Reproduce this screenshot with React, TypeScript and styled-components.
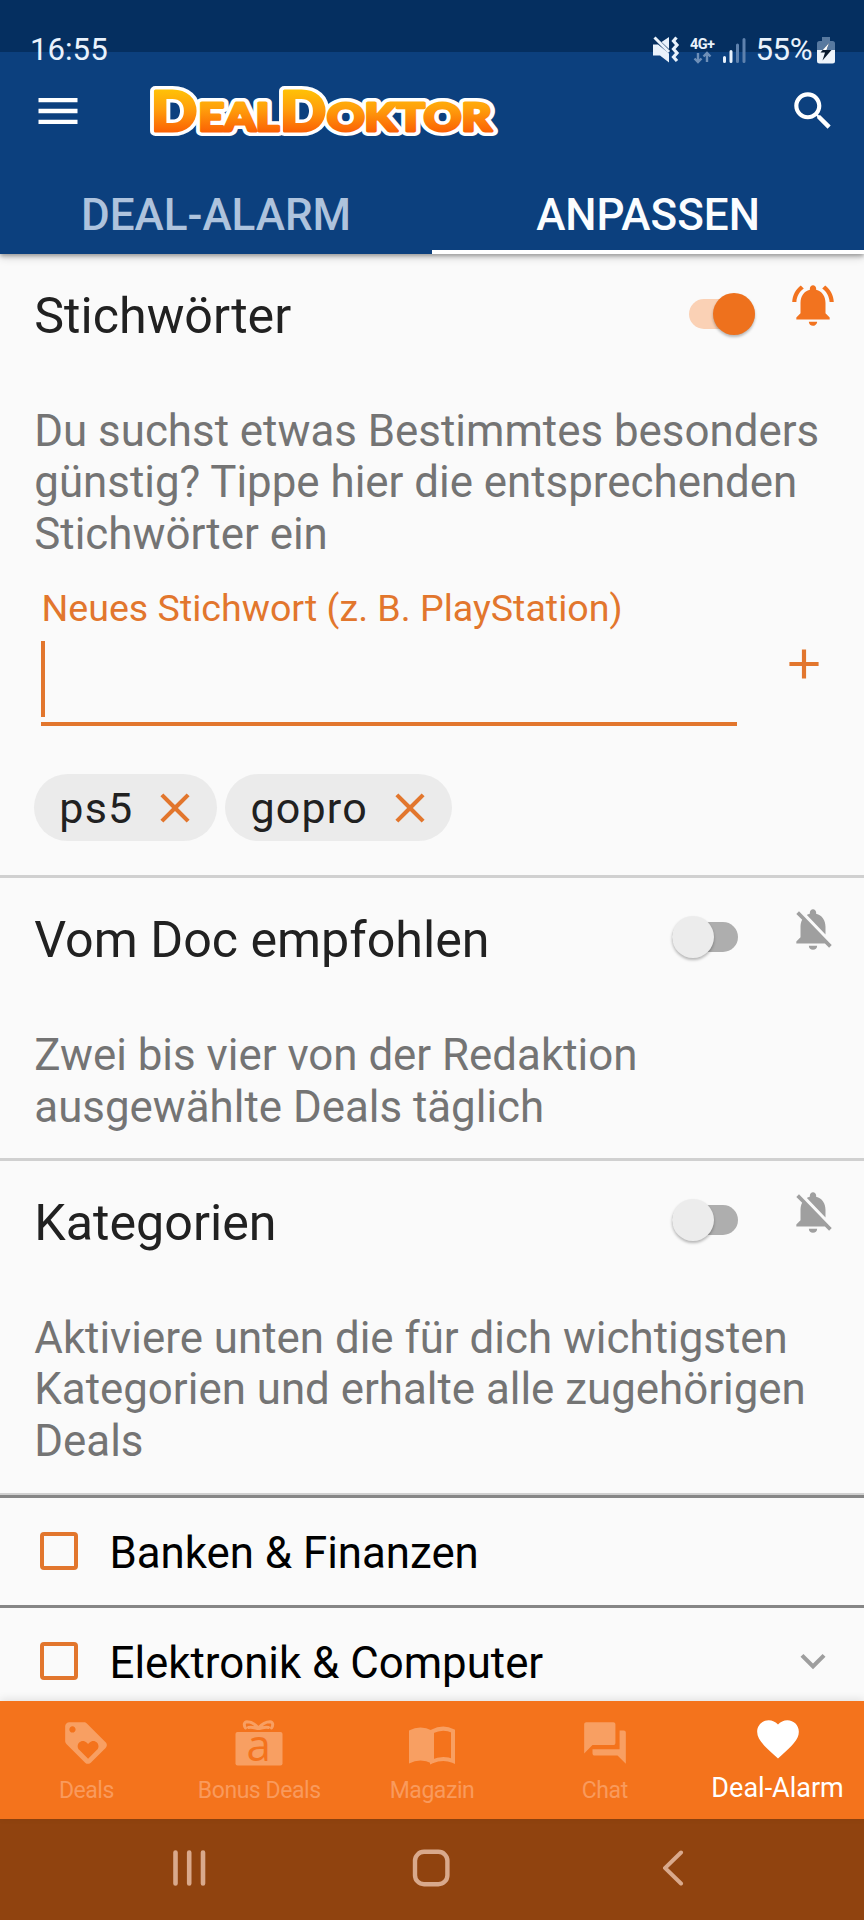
import React from "react";
import styled, { createGlobalStyle } from "styled-components";

const ORANGE = "#f4731c";
const ACCENT = "#e2762d";
const PAPER = "#fafafa";
const BLUE = "#0c407e";

const GlobalStyle = createGlobalStyle`
  *, *::before, *::after { box-sizing: border-box; }
  body { margin: 0; background: ${PAPER}; font-family: Roboto, "Liberation Sans", sans-serif; }
  svg { display: block; flex: none; }
  h2, p { margin: 0; font-weight: 400; }
`;

const Screen = styled.div`
  width: 864px;
  height: 1920px;
  display: flex;
  flex-direction: column;
  overflow: hidden;
  background: ${PAPER};
`;

/* ---------- header ---------- */

const Header = styled.header`
  position: relative;
  z-index: 1;
  flex: none;
  height: 254px;
  display: flex;
  flex-direction: column;
  color: #fff;
  background: linear-gradient(#052f60 0 52.5px, ${BLUE} 52.5px);
  box-shadow: 0 2px 4px rgba(0, 0, 0, 0.3), 0 4px 8px rgba(0, 0, 0, 0.14);
`;

const StatusBar = styled.div`
  height: 76px;
  padding: 24px 29px 0 30px;
  display: flex;
  align-items: center;
  justify-content: space-between;
  font-size: 31.2px;
  line-height: 50px;
  color: #e9f2fc;
`;

const StatusIcons = styled.div`
  display: flex;
  align-items: center;
`;

const Percent = styled.span`
  margin: 0 5px 0 8px;
  letter-spacing: -0.5px;
`;

const Toolbar = styled.div`
  height: 70px;
  padding: 0 26px 0 32px;
  display: flex;
  align-items: center;
`;

const LogoSlot = styled.div`
  flex: 1;
  padding-left: 56px;
`;

const Tabs = styled.nav`
  flex: 1;
  display: flex;
`;

const Tab = styled.div<{ $active?: boolean }>`
  flex: 1;
  display: flex;
  justify-content: center;
  padding-top: 43px;
  font-size: 44px;
  font-weight: 500;
  line-height: 52px;
  color: ${(p) => (p.$active ? "#fbfdff" : "#aec3dd")};
  border-bottom: 4px solid ${(p) => (p.$active ? "#fff" : "transparent")};
`;

/* ---------- settings sections ---------- */

const Content = styled.main`
  flex: 1;
  min-height: 0;
  overflow: hidden;
`;

const Section = styled.section`
  padding: 0 26px 25px 34.3px;
  border-bottom: 3px solid #d0d0d0;
  &:last-of-type { border-bottom-width: 2px; padding-bottom: 26px; }
`;

const SectionHead = styled.div`
  height: 152px;
  display: flex;
  align-items: flex-start;
`;

const Title = styled.h2`
  flex: 1;
  padding-top: 32px;
  font-size: 50.2px;
  line-height: 59px;
  color: #212121;
`;

const Track = styled.span<{ $on?: boolean }>`
  width: 66px;
  height: 30px;
  border-radius: 15px;
  margin: ${(p) => (p.$on ? "45px 33px 0 0" : "44px 50px 0 0")};
  display: flex;
  align-items: center;
  justify-content: ${(p) => (p.$on ? "flex-end" : "flex-start")};
  background: ${(p) => (p.$on ? "#fad1b5" : "#aeaeae")};
`;

const Thumb = styled.span<{ $on?: boolean }>`
  flex: none;
  width: 42px;
  height: 42px;
  border-radius: 50%;
  background: ${(p) => (p.$on ? "#ee711d" : "#ececec")};
  box-shadow: 0 2px 3px rgba(0, 0, 0, 0.28);
`;

const BellSlot = styled.span`
  padding-top: 26px;
`;

const Description = styled.p`
  font-size: 43.85px;
  line-height: 51.4px;
  color: #747474;
  white-space: nowrap;
`;

const KeywordForm = styled.div`
  padding: 25.5px 9px 0 7.2px;
  display: flex;
  justify-content: space-between;
`;

const Field = styled.div`
  width: 695.5px;
  height: 140.5px;
  border-bottom: 4.5px solid ${ACCENT};
`;

const FieldLabel = styled.div`
  height: 55px;
  font-size: 37.6px;
  line-height: 44px;
  white-space: nowrap;
  color: ${ACCENT};
`;

const Caret = styled.div`
  width: 4px;
  height: 76px;
  background: ${ACCENT};
`;

const AddSlot = styled.div`
  padding-top: 53.5px;
`;

const Chips = styled.div`
  display: flex;
  gap: 8px;
  padding: 48px 0 9px;
`;

const Chip = styled.span`
  height: 67px;
  padding: 0 17px 0 25px;
  display: flex;
  align-items: center;
  gap: 17px;
  border-radius: 34px;
  background: #ebebeb;
  color: #212121;
  font-size: 43px;
  letter-spacing: 1.2px;
`;

const CategoryRow = styled.div`
  height: 110px;
  padding: 0 26px 2px 40px;
  display: flex;
  align-items: center;
  border-top: 3px solid #868686;
`;

const Checkbox = styled.span`
  width: 38px;
  height: 38px;
  margin-right: 31.5px;
  border: 4.5px solid ${ACCENT};
  border-radius: 4px;
`;

const CategoryName = styled.span`
  flex: 1;
  padding-top: 4px;
  font-size: 43.8px;
  line-height: 52px;
  color: #000;
  white-space: nowrap;
`;

/* ---------- bottom bars ---------- */

const BottomNav = styled.nav`
  position: relative;
  z-index: 1;
  flex: none;
  height: 118px;
  display: grid;
  grid-template-columns: repeat(5, 1fr);
  background: ${ORANGE};
  box-shadow: 0 -2px 8px rgba(0, 0, 0, 0.1);
`;

const NavItem = styled.div<{ $active?: boolean }>`
  display: flex;
  flex-direction: column;
  align-items: center;
  padding-top: ${(p) => (p.$active ? 13 : 17)}px;
  gap: ${(p) => (p.$active ? 10 : 9)}px;
  font-size: ${(p) => (p.$active ? 27 : 23)}px;
  letter-spacing: ${(p) => (p.$active ? 0 : -0.45)}px;
  line-height: 28px;
  white-space: nowrap;
  color: ${(p) => (p.$active ? "#fff" : "#f99a5c")};
`;

const SystemBar = styled.div`
  flex: none;
  height: 101px;
  padding: 0 173px 4px;
  display: flex;
  align-items: center;
  justify-content: space-between;
  background: #90430f;
`;

/* ---------- icons ---------- */

const icons = {
  menu: "M3 18h18v-2H3v2zm0-5h18v-2H3v2zm0-7v2h18V6H3z",
  search:
    "M15.5 14h-.79l-.28-.27C15.41 12.59 16 11.11 16 9.5 16 5.91 13.09 3 9.5 3S3 5.91 3 9.5 5.91 16 9.5 16c1.61 0 3.09-.59 4.23-1.57l.27.28v.79l5 4.99L20.49 19l-4.99-5zm-6 0C7.01 14 5 11.99 5 9.5S7.01 5 9.5 5 14 7.01 14 9.5 11.99 14 9.5 14z",
  bellOn:
    "M7.58 4.08L6.15 2.65C3.75 4.48 2.17 7.3 2.03 10.5h2c.15-2.65 1.51-4.97 3.55-6.42zm12.39 6.42h2c-.15-3.2-1.73-6.02-4.12-7.85l-1.42 1.43c2.02 1.45 3.39 3.77 3.54 6.42zM18 11c0-3.07-1.64-5.64-4.5-6.32V4c0-.83-.67-1.5-1.5-1.5s-1.5.67-1.5 1.5v.68C7.63 5.36 6 7.92 6 11v5l-2 2v1h16v-1l-2-2v-5zm-6 11c.14 0 .27-.01.4-.04.65-.14 1.18-.58 1.44-1.18.1-.24.15-.5.15-.78h-4c.01 1.1.9 2 2.01 2z",
  bellOff:
    "M20 18.69L7.84 6.14 5.27 3.49 4 4.76l2.8 2.8v.01c-.52.99-.8 2.16-.8 3.42v5l-2 2v1h13.73l2 2L21 19.72l-1-1.03zM12 22c1.11 0 2-.89 2-2h-4c0 1.11.89 2 2 2zm6-7.32V11c0-3.08-1.64-5.64-4.5-6.32V4c0-.83-.67-1.5-1.5-1.5s-1.5.67-1.5 1.5v.68c-.15.03-.29.08-.42.12-.1.03-.2.07-.3.11h-.01c-.01 0-.01 0-.02.01-.23.09-.46.2-.68.31 0 0-.01 0-.01.01L18 14.68z",
  add: "M19 13h-6v6h-2v-6H5v-2h6V5h2v6h6v2z",
  close:
    "M19 6.41L17.59 5 12 10.59 6.41 5 5 6.41 10.59 12 5 17.59 6.41 19 12 13.41 17.59 19 19 17.59 13.41 12z",
  expand: "M16.59 8.59L12 13.17 7.41 8.59 6 10l6 6 6-6z",
  loyalty:
    "M21.41 11.58l-9-9C12.05 2.22 11.55 2 11 2H4c-1.1 0-2 .9-2 2v7c0 .55.22 1.05.59 1.42l9 9c.36.36.86.58 1.41.58.55 0 1.05-.22 1.41-.59l7-7c.37-.36.59-.86.59-1.41 0-.55-.23-1.06-.59-1.42zM5.5 7C4.67 7 4 6.33 4 5.5S4.67 4 5.5 4 7 4.67 7 5.5 6.33 7 5.5 7zm11.77 8.27L13 19.54l-4.27-4.27C8.28 14.81 8 14.19 8 13.5c0-1.38 1.12-2.5 2.5-2.5.69 0 1.32.28 1.77.74l.73.72.73-.73c.45-.45 1.08-.73 1.77-.73 1.38 0 2.5 1.12 2.5 2.5 0 .69-.28 1.32-.73 1.77z",
  chat: "M21 6h-2v9H6v2c0 .55.45 1 1 1h11l4 4V7c0-.55-.45-1-1-1zm-4 6V3c0-.55-.45-1-1-1H3c-.55 0-1 .45-1 1v14l4-4h10c.55 0 1-.45 1-1z",
  heart:
    "M12 21.35l-1.45-1.32C5.4 15.36 2 12.28 2 8.5 2 5.42 4.42 3 7.5 3c1.74 0 3.41.81 4.5 2.09C13.09 3.81 14.76 3 16.5 3 19.58 3 22 5.42 22 8.5c0 3.78-3.4 6.86-8.55 11.54L12 21.35z",
};

const Icon = ({ name, size = 50, color = "currentColor" }: { name: keyof typeof icons; size?: number; color?: string }) => (
  <svg width={size} height={size} viewBox="0 0 24 24" fill={color}>
    <path d={icons[name]} />
  </svg>
);

const GiftSvg = styled.svg`
  margin: -8px 0;
`;

const GiftIcon = () => (
  <GiftSvg width="50" height="66" viewBox="0 -8 50 66">
    <rect x="1.5" y="14" width="47" height="33.5" rx="2" fill="#f89f62" />
    <path
      d="M24.5 10C21 6 17 3.8 13 3.8C10 4 9.5 7 11.5 10M24.5 10C28 6 32 3.8 36 3.8C39 4 39.5 7 37.5 10M14.5 9.5C18.5 8.5 22 10.5 24.5 10.5S30.5 8.5 34.5 9.5"
      fill="none"
      stroke="#f89f62"
      strokeWidth="3"
      strokeLinecap="round"
    />
    <text x="24.5" y="42.5" fontFamily="Open Sans, sans-serif" fontSize="44" textAnchor="middle" fill={ORANGE}>
      a
    </text>
  </GiftSvg>
);

const BookIcon = () => (
  <svg width="50" height="50" viewBox="0 0 50 50">
    <path d="M2 12.5Q13.5 6.5 25 12.5V45.5Q13.5 39.5 2 45.5Z" fill="#f89f62" />
    <path d="M25 13.5Q36 8 46 13V43Q36 39 25 43.5Z" fill="none" stroke="#f89f62" strokeWidth="4" />
  </svg>
);

const MuteVibrateIcon = () => (
  <svg width="38" height="28" viewBox="0 0 38 28" fill="#e9f2fc">
    <path d="M1 8.5h5l11 9V26.5L8 19.5H1zM9.5 6L17 1v12z" />
    <path d="M2.5 1.5L17 16" stroke="#e9f2fc" strokeWidth="3" />
    <path d="M24.5 1.5l-3 3.5 3.5 4-3.5 4 3.5 4-3.5 4 3.5 4" fill="none" stroke="#e9f2fc" strokeWidth="3.2" />
  </svg>
);

const NetworkIcon = () => (
  <svg width="58" height="30" viewBox="0 0 58 30">
    <text x="0" y="13.5" fontFamily="Roboto, sans-serif" fontSize="14.5" fontWeight="700" fill="#e9f2fc" textLength="25">
      4G+
    </text>
    <path d="M8 18v9M4.5 23.5L8 27l3.5-3.5M17 27v-9M13.5 21.5L17 18l3.5 3.5" fill="none" stroke="#6e8fb8" strokeWidth="2.4" />
    <path d="M34.5 22.5v4M41 16.5v10" stroke="#e9f2fc" strokeWidth="3" strokeLinecap="round" />
    <path d="M47.5 10v16.5M54 4.5v22" stroke="#5f82ae" strokeWidth="3" strokeLinecap="round" />
  </svg>
);

const BatteryIcon = () => (
  <svg width="18" height="27" viewBox="0 0 18 27">
    <path d="M5 0h8v4h2.5Q18 4 18 6.5V14H0V6.5Q0 4 2.5 4H5z" fill="#58799f" />
    <path d="M0 13h18v11q0 2.5-2.5 2.5h-13Q0 26.5 0 24z" fill="#eef4fb" />
    <path d="M12 6L3.5 15.5H8L5.5 23.5 14.5 13H9.5z" fill="#08182c" />
    <path d="M12 6L5.7 13H9.5z" fill="#fff" />
  </svg>
);

const logoParts = [
  { text: "D", x: 151, size: 54.5, length: 46 },
  { text: "EAL", x: 198.5, size: 38, length: 80.5 },
  { text: "D", x: 280, size: 54.5, length: 46 },
  { text: "OKTOR", x: 327, size: 38, length: 164.5 },
];

const LogoText = (props: React.SVGProps<SVGGElement>) => (
  <g fontFamily="Lato, sans-serif" fontWeight="900" strokeLinejoin="round" {...props}>
    {logoParts.map((p, i) => (
      <text key={i} x={p.x} y="130.5" fontSize={p.size} textLength={p.length} lengthAdjust="spacingAndGlyphs">
        {p.text}
      </text>
    ))}
  </g>
);

const Logo = () => (
  <svg width="370" height="70" viewBox="140 76 370 70">
    <defs>
      <linearGradient id="sunset" gradientUnits="userSpaceOnUse" x1="0" y1="90" x2="0" y2="132">
        <stop offset="0" stopColor="#ffc107" />
        <stop offset=".45" stopColor="#ff9f0c" />
        <stop offset="1" stopColor="#fb6204" />
      </linearGradient>
    </defs>
    <LogoText fill="#fff" stroke="#fff" strokeWidth="10" />
    <LogoText fill="url(#sunset)" stroke="url(#sunset)" strokeWidth="3" />
  </svg>
);

const RecentsIcon = () => (
  <svg width="33" height="36" viewBox="0 0 33 36">
    <path d="M2.5 2.5v31M16.2 2.5v31M30 2.5v31" stroke="#d9a98c" strokeWidth="4.6" strokeLinecap="round" />
  </svg>
);

const HomeIcon = () => (
  <svg width="46" height="38" viewBox="0 0 46 38">
    <rect x="3" y="2.8" width="32.4" height="32.4" rx="9" fill="none" stroke="#d9a98c" strokeWidth="4.4" />
  </svg>
);

const BackIcon = () => (
  <svg width="28" height="36" viewBox="0 0 28 36">
    <path d="M18 2.5L2 18l16 15.5" fill="none" stroke="#d9a98c" strokeWidth="4" strokeLinecap="round" />
  </svg>
);

/* ---------- parts ---------- */

const AlarmHead = ({ title, on = false }: { title: string; on?: boolean }) => (
  <SectionHead>
    <Title>{title}</Title>
    <Track $on={on}>
      <Thumb $on={on} />
    </Track>
    <BellSlot>
      <Icon name={on ? "bellOn" : "bellOff"} color={on ? "#f2731f" : "#9f9f9f"} />
    </BellSlot>
  </SectionHead>
);

export default function App() {
  return (
    <Screen>
      <GlobalStyle />
      <Header>
        <StatusBar>
          <span>16:55</span>
          <StatusIcons>
            <MuteVibrateIcon />
            <NetworkIcon />
            <Percent>55%</Percent>
            <BatteryIcon />
          </StatusIcons>
        </StatusBar>
        <Toolbar>
          <Icon name="menu" size={52} />
          <LogoSlot>
            <Logo />
          </LogoSlot>
          <Icon name="search" />
        </Toolbar>
        <Tabs>
          <Tab>DEAL-ALARM</Tab>
          <Tab $active>ANPASSEN</Tab>
        </Tabs>
      </Header>

      <Content>
        <Section>
          <AlarmHead title="Stichwörter" on />
          <Description>
            Du suchst etwas Bestimmtes besonders
            <br />
            günstig? Tippe hier die entsprechenden
            <br />
            Stichwörter ein
          </Description>
          <KeywordForm>
            <Field>
              <FieldLabel>Neues Stichwort (z. B. PlayStation)</FieldLabel>
              <Caret />
            </Field>
            <AddSlot>
              <Icon name="add" color={ACCENT} />
            </AddSlot>
          </KeywordForm>
          <Chips>
            {["ps5", "gopro"].map((word) => (
              <Chip key={word}>
                {word}
                <Icon name="close" color={ACCENT} />
              </Chip>
            ))}
          </Chips>
        </Section>

        <Section>
          <AlarmHead title="Vom Doc empfohlen" />
          <Description>
            Zwei bis vier von der Redaktion
            <br />
            ausgewählte Deals täglich
          </Description>
        </Section>

        <Section>
          <AlarmHead title="Kategorien" />
          <Description>
            Aktiviere unten die für dich wichtigsten
            <br />
            Kategorien und erhalte alle zugehörigen
            <br />
            Deals
          </Description>
        </Section>

        <CategoryRow>
          <Checkbox />
          <CategoryName>Banken &amp; Finanzen</CategoryName>
        </CategoryRow>
        <CategoryRow>
          <Checkbox />
          <CategoryName>Elektronik &amp; Computer</CategoryName>
          <Icon name="expand" color="#9e9e9e" />
        </CategoryRow>
      </Content>

      <BottomNav>
        <NavItem>
          <Icon name="loyalty" color="#f89f62" />
          Deals
        </NavItem>
        <NavItem>
          <GiftIcon />
          Bonus Deals
        </NavItem>
        <NavItem>
          <BookIcon />
          Magazin
        </NavItem>
        <NavItem>
          <Icon name="chat" color="#f89f62" />
          Chat
        </NavItem>
        <NavItem $active>
          <Icon name="heart" />
          Deal-Alarm
        </NavItem>
      </BottomNav>

      <SystemBar>
        <RecentsIcon />
        <HomeIcon />
        <BackIcon />
      </SystemBar>
    </Screen>
  );
}
